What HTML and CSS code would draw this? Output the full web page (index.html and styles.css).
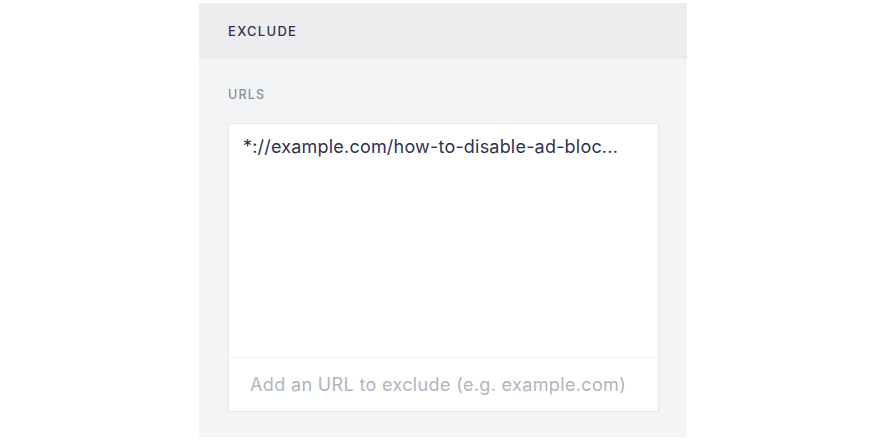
FILE: index.html
```html
<!DOCTYPE html>
<html lang="en">
<head>
  <meta charset="UTF-8" />
  <title>Exclude</title>
  <link rel="stylesheet" href="styles.css">
</head>
<body>

  <div class="panel">
    <div class="panel-header">
      <h3>Exclude</h3>
    </div>

    <div class="panel-body">
      <label class="field-label">URLs</label>

      <div class="url-box">
        <ul class="url-list">
          <li>*://example.com/how-to-disable-ad-bloc...</li>
        </ul>
        <input type="text" class="url-input" placeholder="Add an URL to exclude (e.g. example.com)" />
      </div>
    </div>
  </div>

</body>
</html>
```

FILE: styles.css
```css
* {
  box-sizing: border-box;
  margin: 0;
  padding: 0;
}

body {
  font-family: 'Inter', 'Lato', sans-serif;
  background-color: #ffffff;
  width: 880px;
  height: 442px;
  overflow: hidden;
}

.panel {
  width: 488px;
  margin: 3px 0 0 199px;
  height: 434px;
  background-color: #f3f4f5;
}

.panel-header {
  height: 56px;
  background-color: #ececee;
  padding: 0 29px;
  display: flex;
  align-items: center;
}

.panel-header h3 {
  font-size: 13px;
  font-weight: 500;
  letter-spacing: 1.3px;
  text-transform: uppercase;
  color: #2e3352;
}

.panel-body {
  padding: 28px 28px 0 29px;
}

.field-label {
  display: block;
  font-size: 12.5px;
  font-weight: 500;
  letter-spacing: 1.2px;
  text-transform: uppercase;
  color: #8b8e9d;
  margin-bottom: 21px;
}

.url-box {
  background-color: #ffffff;
  border: 1px solid #e6e7ea;
  height: 289px;
  display: flex;
  flex-direction: column;
}

.url-list {
  list-style: none;
  flex: 1;
  padding: 9px 14px;
}

.url-list li {
  font-size: 18px;
  line-height: 27px;
  letter-spacing: 0.2px;
  color: #2e3352;
}

.url-input {
  height: 54px;
  border: none;
  border-top: 1px solid #eeeff1;
  padding: 0 21px;
  font-family: inherit;
  font-size: 18px;
  letter-spacing: 0.35px;
  color: #2e3352;
  outline: none;
  background: transparent;
}

.url-input::placeholder {
  color: #b1b5c0;
}
```
